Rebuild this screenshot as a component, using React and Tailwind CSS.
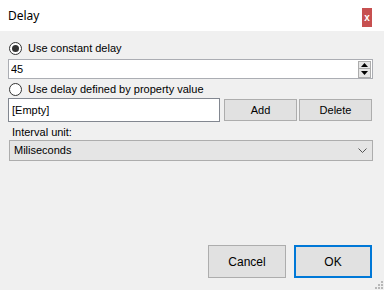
import { useState } from "react";

const font = { fontFamily: '"Liberation Sans", Arial, sans-serif' };

function Radio({ checked, onClick, label }) {
  return (
    <button type="button" onClick={onClick} className="flex h-[13px] items-center gap-[6px] text-[11px] text-black">
      <span className="flex h-[13px] w-[13px] items-center justify-center rounded-full border border-[#333333] bg-white">
        {checked && <span className="h-[7px] w-[7px] rounded-full bg-[#333333]" />}
      </span>
      <span className="leading-[13px]">{label}</span>
    </button>
  );
}

function Spinner() {
  return (
    <div className="flex w-[14px] flex-col">
      <div className="flex h-[8px] items-center justify-center border border-[#acacac] bg-[#e5e5e5]">
        <svg width="7" height="4" viewBox="0 0 7 4">
          <path d="M3.5 0 L7 4 L0 4 Z" fill="#000" />
        </svg>
      </div>
      <div className="flex h-[9px] items-center justify-center border border-t-0 border-[#acacac] bg-[#e5e5e5]">
        <svg width="7" height="4" viewBox="0 0 7 4">
          <path d="M0 0 L7 0 L3.5 4 Z" fill="#000" />
        </svg>
      </div>
    </div>
  );
}

export default function App() {
  const [mode, setMode] = useState("constant");
  const [delay, setDelay] = useState("45");

  return (
    <div className="flex h-[290px] w-[384px] flex-col bg-[#f0f0f0]" style={font}>
      {/* title bar */}
      <div className="flex h-[31px] items-center justify-between bg-white pl-[8px] pr-[12px]">
        <span className="text-[12px] text-black" style={{ fontFamily: '"Noto Sans", "Liberation Sans", sans-serif' }}>
          Delay
        </span>
        <button type="button" className="mt-[4px] flex h-[19px] w-[10px] items-center justify-center bg-[#c75050] text-[10px] font-bold leading-none text-white">
          x
        </button>
      </div>

      <div className="flex flex-1 flex-col px-[8px] pt-[11px]">
        <div className="pl-[1px]">
          <Radio checked={mode === "constant"} onClick={() => setMode("constant")} label="Use constant delay" />
        </div>

        <div className="mt-[4px] mr-[3px] flex h-[20px] items-center justify-between border border-[#abadb3] bg-white pl-[2px] pr-[1px]">
          <input
            value={delay}
            onChange={(e) => setDelay(e.target.value)}
            className="w-full bg-transparent text-[11px] text-black outline-none"
          />
          <Spinner />
        </div>

        <div className="mt-[4px] pl-[1px]">
          <Radio checked={mode === "property"} onClick={() => setMode("property")} label="Use delay defined by property value" />
        </div>

        <div className="mt-[2px] flex h-[24px]">
          <div className="flex w-[212px] items-center border border-[#828790] bg-white pl-[3px] text-[11px] text-black">
            [Empty]
          </div>
          <button type="button" className="mt-[1px] ml-[4px] h-[22px] w-[73px] border border-[#adadad] bg-[#e1e1e1] text-[11px] text-black">
            Add
          </button>
          <button type="button" className="mt-[1px] ml-[2px] h-[22px] w-[73px] border border-[#adadad] bg-[#e1e1e1] text-[11px] text-black">
            Delete
          </button>
        </div>

        <div className="mt-[3px] pl-[4px] text-[11px] leading-[14px] text-black">Interval unit:</div>

        <div className="mt-[1px] ml-[1px] mr-[3px] flex h-[21px] items-center justify-between border border-[#adadad] bg-[#e5e5e5] pl-[4px] pr-[5px] text-[11px] text-black">
          <span>Miliseconds</span>
          <svg width="9" height="5" viewBox="0 0 9 5">
            <path d="M0.5 0.5 L4.5 4.5 L8.5 0.5" stroke="#555" fill="none" strokeWidth="1" />
          </svg>
        </div>

        <div className="mt-auto mr-[4px] mb-[12px] flex justify-end gap-[8px]">
          <button type="button" className="h-[33px] w-[78px] border border-[#adadad] bg-[#e1e1e1] text-[12px] text-black">
            Cancel
          </button>
          <button type="button" className="h-[33px] w-[78px] border-2 border-[#0078d7] bg-[#e1e1e1] text-[12px] text-black">
            OK
          </button>
        </div>
      </div>

      {/* resize grip */}
      <div className="pointer-events-none fixed right-[1px] bottom-[1px] grid grid-cols-3 gap-[1px]">
        {[0, 0, 1, 0, 1, 1, 1, 1, 1].map((v, i) => (
          <span key={i} className={v ? "h-[2px] w-[2px] bg-[#b8b8b8]" : "h-[2px] w-[2px]"} />
        ))}
      </div>
    </div>
  );
}
